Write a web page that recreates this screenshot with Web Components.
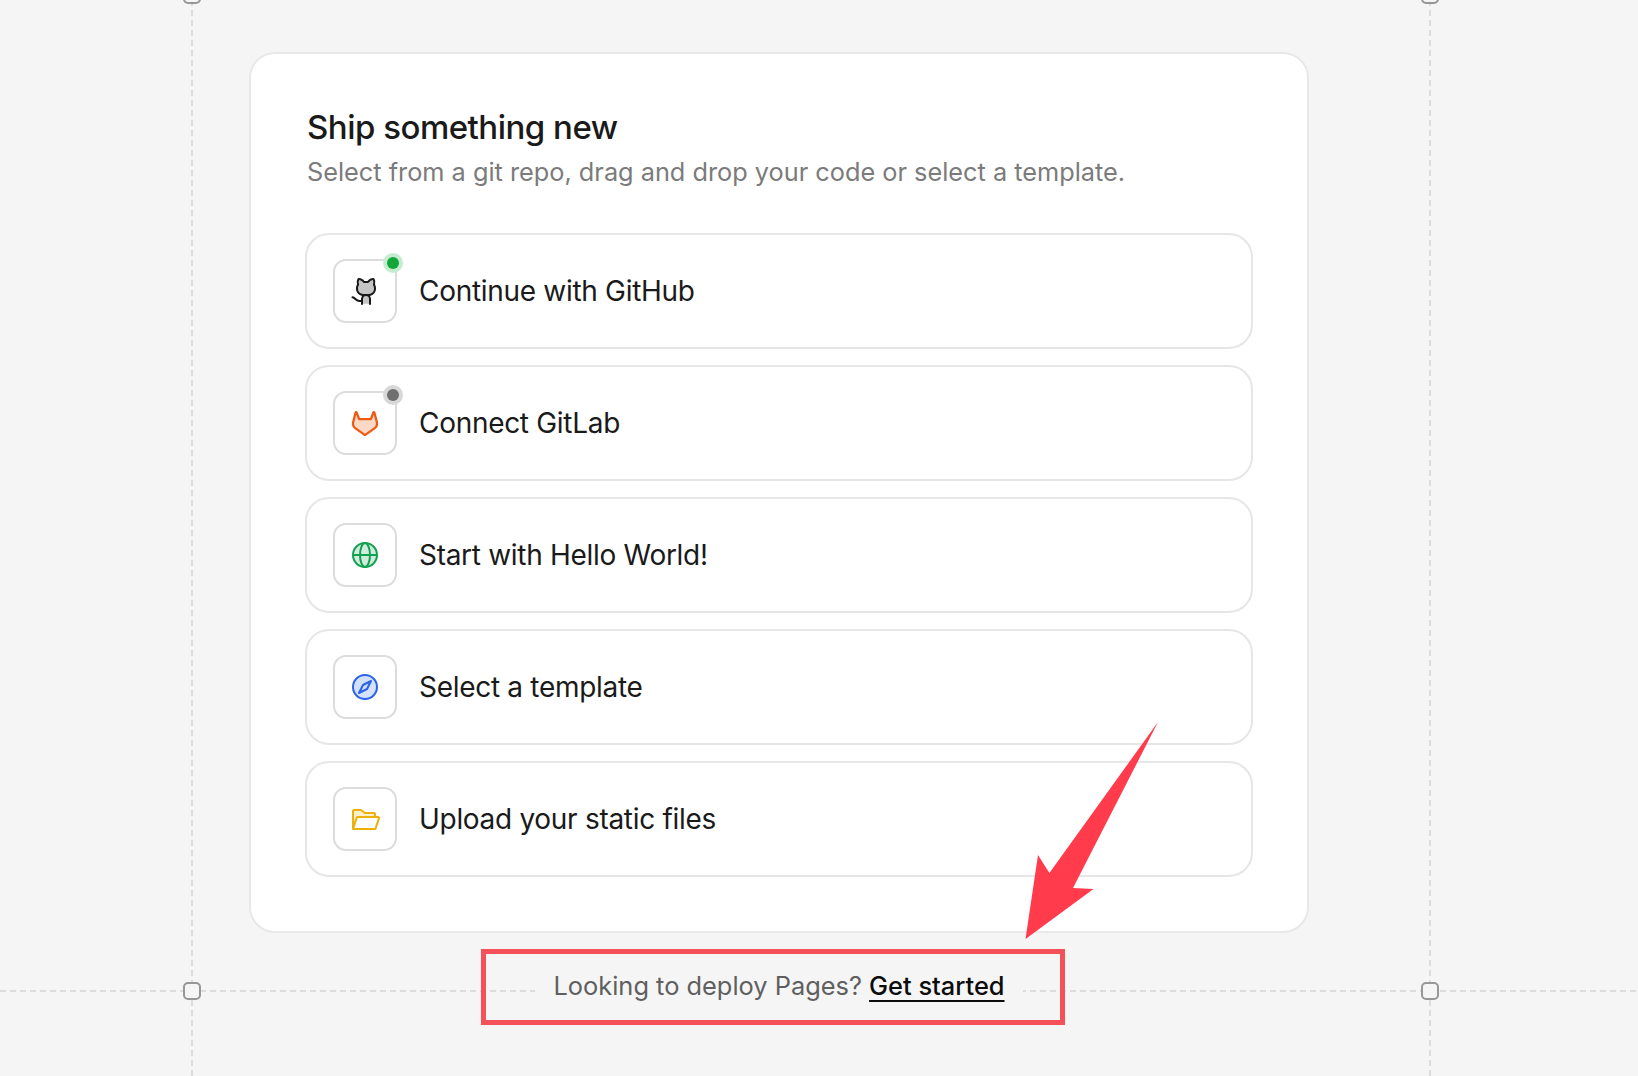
<!doctype html>
<html lang="en">
<head>
<meta charset="utf-8">
<title>Ship something new</title>
<style>
  html { background: #f5f5f5; }
  html, body { margin: 0; height: 100%; overflow: hidden; }
  body { font-family: Inter, "Liberation Sans", sans-serif; }
</style>
</head>
<body>
<canvas-page>
  <ship-card title="Ship something new" subtitle="Select from a git repo, drag and drop your code or select a template.">
    <ship-option status="on" label="Continue with GitHub">
      <svg viewBox="0 0 256 256" width="32" height="32">
        <path fill="#17181a" opacity=".25" d="M208 104v8a48 48 0 0 1-48 48h-48a48 48 0 0 1-48-48v-8a49.3 49.3 0 0 1 8.51-27.3A51.9 51.9 0 0 1 76 32a52 52 0 0 1 43.83 24h32.34A52 52 0 0 1 196 32a51.9 51.9 0 0 1 3.49 44.7A49.3 49.3 0 0 1 208 104Z M112 160h48v70h-48Z"/>
        <path fill="#17181a" d="M208.31,75.68A59.78,59.78,0,0,0,202.93,28,8,8,0,0,0,196,24a59.75,59.75,0,0,0-48,24H124A59.75,59.75,0,0,0,76,24a8,8,0,0,0-6.93,4,59.78,59.78,0,0,0-5.38,47.68A58.14,58.14,0,0,0,56,104v8a56.06,56.06,0,0,0,48.44,55.47A39.8,39.8,0,0,0,96,192v40a8,8,0,0,0,16,0V192a24,24,0,0,1,48,0v40a8,8,0,0,0,16,0V192a39.8,39.8,0,0,0-8.44-24.53A56.06,56.06,0,0,0,216,112v-8A58.14,58.14,0,0,0,208.31,75.68ZM200,112a40,40,0,0,1-40,40H112a40,40,0,0,1-40-40v-8a41.74,41.74,0,0,1,6.9-22.48A8,8,0,0,0,80,73.83a43.81,43.81,0,0,1,.79-33.58,43.88,43.88,0,0,1,32.32,20.06A8,8,0,0,0,119.82,64h32.35a8,8,0,0,0,6.74-3.69,43.87,43.87,0,0,1,32.32-20.06A43.81,43.81,0,0,1,192,73.83a8.09,8.09,0,0,0,1,7.65A41.72,41.72,0,0,1,200,104Z"/>
        <path fill="none" stroke="#17181a" stroke-width="16" stroke-linecap="round" d="M28 178C50 180 54 208 84 208H100"/>
      </svg>
    </ship-option>
    <ship-option status="off" label="Connect GitLab">
      <svg viewBox="0 0 256 256" width="32" height="32">
        <path fill="#f2621c" fill-opacity=".25" stroke="#ee5a12" stroke-width="18" stroke-linejoin="round" d="M222.4 119.1 202.5 43a4 4 0 0 0-7.5-.4L175.4 96H80.6L61 42.6a4 4 0 0 0-7.5.4L33.6 119.1a49.2 49.2 0 0 0 19 52.5l73.1 51.7a4 4 0 0 0 4.6 0l73.1-51.7a49.2 49.2 0 0 0 19-52.5Z"/>
      </svg>
    </ship-option>
    <ship-option label="Start with Hello World!">
      <svg viewBox="0 0 256 256" width="32" height="32" fill="none" stroke="#12a150" stroke-width="16">
        <circle cx="128" cy="128" r="96" fill="#12a150" fill-opacity=".2"/>
        <path d="M32 128h192"/>
        <ellipse cx="128" cy="128" rx="40" ry="96"/>
      </svg>
    </ship-option>
    <ship-option label="Select a template">
      <svg viewBox="0 0 256 256" width="32" height="32" fill="none" stroke="#2b63e8" stroke-width="16" stroke-linejoin="round">
        <circle cx="128" cy="128" r="96" fill="#2b63e8" fill-opacity=".2"/>
        <path d="M176 80l-32 64-64 32 32-64Z"/>
      </svg>
    </ship-option>
    <ship-option label="Upload your static files">
      <svg viewBox="0 0 256 256" width="32" height="32">
        <path fill="#edb008" opacity=".22" d="M208,88v24H69.77a8,8,0,0,0-7.59,5.47L32,208V64a8,8,0,0,1,8-8H93.33a8,8,0,0,1,4.8,1.6l27.74,20.8a8,8,0,0,0,4.8,1.6H200A8,8,0,0,1,208,88Z"/>
        <path fill="#edb008" d="M245,110.64A16,16,0,0,0,232,104H216V88a16,16,0,0,0-16-16H130.67L102.94,51.2a16.14,16.14,0,0,0-9.6-3.2H40A16,16,0,0,0,24,64V208h0a8,8,0,0,0,8,8H211.1a8,8,0,0,0,7.59-5.47l28.49-85.47A16.05,16.05,0,0,0,245,110.64ZM93.34,64,123.2,86.4A8,8,0,0,0,128,88h72v16H69.77a16,16,0,0,0-15.18,10.94L40,158.7V64Zm112,136H43.1l26.67-80H232Z"/>
      </svg>
    </ship-option>
  </ship-card>
  <pages-hint>Looking to deploy Pages? <a href="#">Get started</a></pages-hint>
</canvas-page>
<guide-lines></guide-lines>
<red-callout></red-callout>

<script>
class CanvasPage extends HTMLElement {
  connectedCallback() {
    this.attachShadow({ mode: 'open' });
    this.shadowRoot.innerHTML = `
      <style>
        :host {
          display: flex;
          flex-direction: column;
          width: 1060px;
          padding: 52px 0 0 249px;
        }
      </style>
      <slot></slot>
    `;
  }
}

class ShipCard extends HTMLElement {
  connectedCallback() {
    this.attachShadow({ mode: 'open' });
    this.shadowRoot.innerHTML = `
      <style>
        :host {
          display: block;
          box-sizing: border-box;
          background: #fff;
          border: 2px solid #e8e8e8;
          border-radius: 26px;
          padding: 55px 54px 54px;
        }
        h1 {
          margin: 0 0 0 2px;
          font-size: 33px;
          line-height: 36px;
          font-weight: 460;
          letter-spacing: -0.5px;
          color: #1a1a1a;
        }
        p {
          margin: 11px 0 45px 2px;
          font-size: 25.3px;
          line-height: 32px;
          color: #7b7b7b;
        }
        .list {
          display: flex;
          flex-direction: column;
          gap: 16px;
        }
      </style>
      <h1>${this.getAttribute('title')}</h1>
      <p>${this.getAttribute('subtitle')}</p>
      <div class="list"><slot></slot></div>
    `;
  }
}

class ShipOption extends HTMLElement {
  connectedCallback() {
    this.attachShadow({ mode: 'open' });
    const status = this.getAttribute('status');
    this.shadowRoot.innerHTML = `
      <style>
        :host {
          display: flex;
          align-items: center;
          gap: 22px;
          box-sizing: border-box;
          height: 116px;
          padding: 0 26px;
          background: #fff;
          border: 2px solid #e6e6e6;
          border-radius: 24px;
        }
        .icon {
          position: relative;
          display: flex;
          align-items: center;
          justify-content: center;
          box-sizing: border-box;
          width: 64px;
          height: 64px;
          border: 2px solid #dcdcdc;
          border-radius: 13px;
        }
        .dot {
          position: absolute;
          top: -4px;
          right: -4px;
          width: 12px;
          height: 12px;
          border-radius: 50%;
        }
        .dot.on { background: #12a538; box-shadow: 0 0 0 4px #c5ecd0; }
        .dot.off { background: #6f6f6f; box-shadow: 0 0 0 4px #d8d8d8; }
        .label {
          font-size: 28px;
          line-height: 36px;
          letter-spacing: -0.3px;
          color: #1a1a1a;
        }
      </style>
      <div class="icon">
        <slot></slot>
        ${status ? `<span class="dot ${status}"></span>` : ''}
      </div>
      <span class="label">${this.getAttribute('label')}</span>
    `;
  }
}

class PagesHint extends HTMLElement {
  connectedCallback() {
    this.attachShadow({ mode: 'open' });
    this.shadowRoot.innerHTML = `
      <style>
        :host {
          display: block;
          align-self: center;
          margin-top: 35px;
          padding: 0 18px;
          background: #f5f5f5;
          font-size: 25.4px;
          line-height: 36px;
          color: #5f5f5f;
        }
        ::slotted(a) {
          color: #0c0c0c;
          font-weight: 500;
          text-decoration: underline;
          text-underline-offset: 5px;
          text-decoration-thickness: 2px;
        }
      </style>
      <slot></slot>
    `;
  }
}

// canvas guides sit behind the card and run across the whole page
class GuideLines extends HTMLElement {
  connectedCallback() {
    this.attachShadow({ mode: 'open' });
    this.shadowRoot.innerHTML = `
      <style>
        :host { position: absolute; inset: 0; display: block; pointer-events: none; z-index: -1; }
        svg { display: block; }
        .dash { stroke: #dcdcdc; stroke-width: 2; stroke-dasharray: 6 4; fill: none; }
        .handle { fill: #f5f5f5; stroke: #979797; stroke-width: 2; }
      </style>
      <svg width="1638" height="1076" viewBox="0 0 1638 1076">
        <path class="dash" d="M192 0V1076M1430 0V1076M0 991H1638"/>
        <rect class="handle" x="184" y="-14" width="16" height="17" rx="4"/>
        <rect class="handle" x="1422" y="-14" width="16" height="17" rx="4"/>
        <rect class="handle" x="184" y="983" width="16" height="16" rx="4"/>
        <rect class="handle" x="1422" y="983" width="16" height="16" rx="4"/>
      </svg>
    `;
  }
}

class RedCallout extends HTMLElement {
  connectedCallback() {
    this.attachShadow({ mode: 'open' });
    this.shadowRoot.innerHTML = `
      <style>
        :host { position: absolute; inset: 0; display: block; pointer-events: none; }
        svg { display: block; }
      </style>
      <svg width="1638" height="1076" viewBox="0 0 1638 1076">
        <rect x="483.5" y="951.5" width="579" height="71" fill="none" stroke="#f4515b" stroke-width="5"/>
        <path fill="#ff3b4c" d="M1158 722 1073 888 1093.5 889 1025.5 939 1038 855 1049.4 873Z"/>
      </svg>
    `;
  }
}

customElements.define('canvas-page', CanvasPage);
customElements.define('ship-card', ShipCard);
customElements.define('ship-option', ShipOption);
customElements.define('pages-hint', PagesHint);
customElements.define('guide-lines', GuideLines);
customElements.define('red-callout', RedCallout);
</script>
</body>
</html>
